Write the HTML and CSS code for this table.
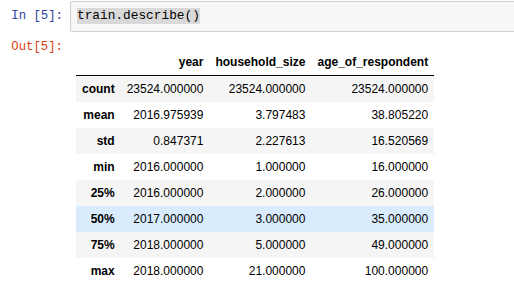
FILE: index.html
```html
<!DOCTYPE html>
<html lang="en">
<head>
  <meta charset="UTF-8" />
  <title>Notebook</title>
  <link rel="stylesheet" href="styles.css">
</head>
<body>

<div class="cell">
  <div class="input">
    <div class="prompt in-prompt">In&nbsp;[5]:</div>
    <div class="input-area"><span class="selected">train.describe()</span></div>
  </div>

  <div class="output">
    <div class="prompt out-prompt">Out[5]:</div>
    <div class="output-subarea">
      <table class="dataframe">
        <thead>
          <tr>
            <th></th>
            <th>year</th>
            <th>household_size</th>
            <th>age_of_respondent</th>
          </tr>
        </thead>
        <tbody>
          <tr><th>count</th><td>23524.000000</td><td>23524.000000</td><td>23524.000000</td></tr>
          <tr><th>mean</th><td>2016.975939</td><td>3.797483</td><td>38.805220</td></tr>
          <tr><th>std</th><td>0.847371</td><td>2.227613</td><td>16.520569</td></tr>
          <tr><th>min</th><td>2016.000000</td><td>1.000000</td><td>16.000000</td></tr>
          <tr><th>25%</th><td>2016.000000</td><td>2.000000</td><td>26.000000</td></tr>
          <tr class="hover"><th>50%</th><td>2017.000000</td><td>3.000000</td><td>35.000000</td></tr>
          <tr><th>75%</th><td>2018.000000</td><td>5.000000</td><td>49.000000</td></tr>
          <tr><th>max</th><td>2018.000000</td><td>21.000000</td><td>100.000000</td></tr>
        </tbody>
      </table>
    </div>
  </div>
</div>

</body>
</html>
```

FILE: styles.css
```css
body {
  margin: 0;
  background: #fff;
  color: #000;
  font-family: "Liberation Sans", Arial, sans-serif;
}
.cell {
  padding-top: 1px;
}
.input, .output {
  display: flex;
  align-items: flex-start;
}
.prompt {
  width: 63px;
  flex-shrink: 0;
  padding-right: 7px;
  text-align: right;
  font-family: "Liberation Mono", monospace;
  font-size: 12.3px;
  line-height: 16px;
}
.in-prompt {
  color: #303F9F;
  padding-top: 7px;
}
.out-prompt {
  color: #D84315;
}
.input-area {
  flex-grow: 1;
  background: #f7f7f7;
  border: 1px solid #cfcfcf;
  border-right: none;
  border-radius: 2px 0 0 2px;
  padding: 6px 6px 7px;
  font-family: "Liberation Mono", monospace;
  font-size: 12.8px;
  line-height: 16px;
  height: 16px;
}
.selected {
  display: inline-block;
  background: #d9d9d9;
}
.output {
  margin-top: 7px;
}
.output-subarea {
  padding: 10px 6px 6px;
}
table.dataframe {
  border-collapse: collapse;
  border-spacing: 0;
  font-size: 12px;
  color: #000;
}
table.dataframe th,
table.dataframe td {
  text-align: right;
  vertical-align: middle;
  padding: 6px;
  line-height: 14px;
  white-space: nowrap;
}
table.dataframe th {
  font-weight: bold;
}
table.dataframe thead {
  border-bottom: 1px solid #000;
}
table.dataframe tbody tr:nth-child(odd) {
  background: #f5f5f5;
}
table.dataframe tbody tr.hover {
  background: #d9ecfd;
}
```
